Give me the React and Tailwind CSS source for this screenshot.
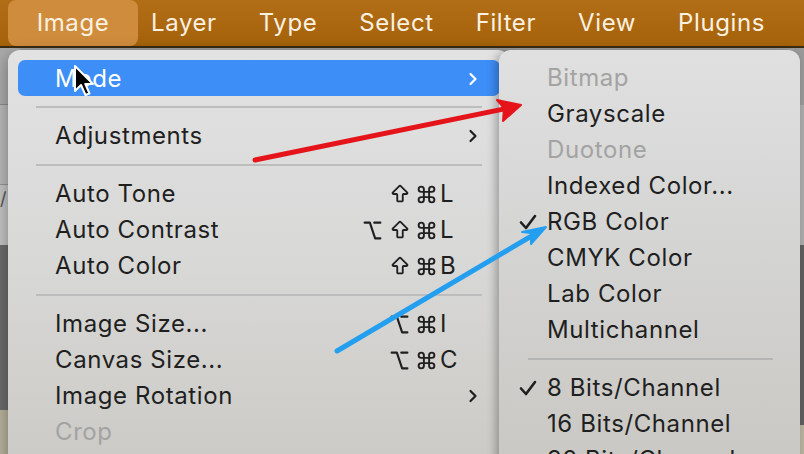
import React from "react";
import { Command, Option, ArrowBigUp } from "lucide-react";

const font = { fontFamily: "Inter, 'Noto Sans', 'DejaVu Sans', sans-serif" };

function Chevron() {
  return (
    <svg width="10" height="14" viewBox="0 0 10 14" className="shrink-0">
      <path d="M2.5 2 L7.5 7 L2.5 12" fill="none" stroke="currentColor" strokeWidth="2.2" strokeLinecap="round" strokeLinejoin="round" />
    </svg>
  );
}

function Check() {
  return (
    <svg width="18" height="16" viewBox="0 0 18 16">
      <path d="M2 8.5 L7 14 L16 2" fill="none" stroke="#1f1f1f" strokeWidth="2.6" strokeLinecap="round" strokeLinejoin="round" />
    </svg>
  );
}

const icons = {
  shift: <ArrowBigUp size={22} strokeWidth={2} />,
  cmd: <Command size={21} strokeWidth={2.2} />,
  opt: <Option size={21} strokeWidth={2.4} />,
};

function Shortcut({ mods, keyc }) {
  return (
    <div className="flex items-center text-[#1f1f1f]">
      {mods.map((m, i) => (
        <span key={i} className="w-[27px] flex justify-center">{icons[m]}</span>
      ))}
      <span className="w-[16px] text-left">{keyc}</span>
    </div>
  );
}

function Row({ label, disabled, shortcut, sub }) {
  return (
    <div className={`h-[36px] flex items-center pl-[47px] pr-[32px] ${disabled ? "text-[#a3a3a3]" : "text-[#1f1f1f]"}`}>
      <span className="flex-1">{label}</span>
      {shortcut && <div className="mr-[22px]">{shortcut}</div>}
      {sub && <span className="text-[#1f1f1f]"><Chevron /></span>}
    </div>
  );
}

function Sep() {
  return (
    <div className="h-[22px] flex items-center">
      <div className="h-[2px] flex-1 bg-[#bdbdbd] ml-[28px] mr-[28px]" />
    </div>
  );
}

function SubRow({ label, disabled, checked }) {
  return (
    <div className={`h-[36px] flex items-center ${disabled ? "text-[#a3a3a3]" : "text-[#1f1f1f]"}`}>
      <span className="w-[48px] flex justify-end pr-[10px]">{checked && <Check />}</span>
      <span>{label}</span>
    </div>
  );
}

export default function App() {
  const bar = ["Layer", "Type", "Select", "Filter", "View", "Plugins"];
  return (
    <div className="relative w-[804px] h-[454px] overflow-hidden bg-[#9e9e9e] text-[24px] tracking-[0.6px]" style={font}>
      {/* menubar */}
      <div className="h-[48px] flex items-center bg-gradient-to-b from-[#b26e17] to-[#a4620a] border-b-2 border-[#3b2a12]">
        <div className="ml-[8px] h-[46px] w-[130px] flex items-center justify-center rounded-[8px] bg-[#d08c3d] text-[#fbf1e0]">Image</div>
        <div className="flex items-center gap-[42px] ml-[13px] text-[#fbf1e0]">
          {bar.map((b) => (
            <span key={b}>{b}</span>
          ))}
        </div>
      </div>

      {/* underlying app background */}
      <div className="flex h-[406px]">
        <div className="w-[20px] flex flex-col">
          <div className="h-[57px] bg-[#a9a9a9] border-b border-[#8a8a8a]" />
          <div className="h-[80px] bg-[#b7b7b7] border-b border-[#939393]" />
          <div className="h-[60px] bg-[#c2c2c2] text-[18px] text-[#555]">/</div>
          <div className="h-[165px] bg-[#6b6b6b]" />
          <div className="flex-1 bg-[#b6b19b]" />
        </div>
        <div className="flex-1" />
        <div className="w-[10px] flex flex-col">
          <div className="h-[57px] bg-[#9a9a9a]" />
          <div className="h-[140px] bg-[#acacac]" />
          <div className="h-[180px] bg-[#5f5f5f]" />
          <div className="flex-1 bg-[#b9b4a0]" />
        </div>
      </div>

      {/* main menu */}
      <div className="absolute left-[8px] top-[50px] w-[502px] h-[420px] rounded-[12px] bg-gradient-to-b from-[#e2e2e2] via-[#d8d8d7] to-[#cbcac5] shadow-[0_4px_16px_rgba(0,0,0,0.35)] pt-[10px]">
        <div className="mx-[10px] h-[36px] rounded-[7px] bg-[#3d8ef7] flex items-center pl-[37px] pr-[22px] pt-[2px] text-white">
          <span className="flex-1">Mode</span>
          <Chevron />
        </div>
        <Sep />
        <Row label="Adjustments" sub />
        <Sep />
        <Row label="Auto Tone" shortcut={<Shortcut mods={["shift", "cmd"]} keyc="L" />} />
        <Row label="Auto Contrast" shortcut={<Shortcut mods={["opt", "shift", "cmd"]} keyc="L" />} />
        <Row label="Auto Color" shortcut={<Shortcut mods={["shift", "cmd"]} keyc="B" />} />
        <Sep />
        <Row label="Image Size..." shortcut={<Shortcut mods={["opt", "cmd"]} keyc="I" />} />
        <Row label="Canvas Size..." shortcut={<Shortcut mods={["opt", "cmd"]} keyc="C" />} />
        <Row label="Image Rotation" sub />
        <Row label="Crop" disabled />
      </div>

      {/* submenu */}
      <div className="absolute left-[499px] top-[50px] w-[301px] h-[430px] rounded-[12px] bg-gradient-to-b from-[#e0e0e0] via-[#d3d3d2] to-[#c9c7c2] shadow-[-3px_2px_10px_rgba(0,0,0,0.3)] pt-[10px]">
        <SubRow label="Bitmap" disabled />
        <SubRow label="Grayscale" />
        <SubRow label="Duotone" disabled />
        <SubRow label="Indexed Color..." />
        <SubRow label="RGB Color" checked />
        <SubRow label="CMYK Color" />
        <SubRow label="Lab Color" />
        <SubRow label="Multichannel" />
        <div className="h-[22px] flex items-center">
          <div className="h-[2px] flex-1 bg-[#b5b5b5] ml-[29px] mr-[27px]" />
        </div>
        <SubRow label="8 Bits/Channel" checked />
        <SubRow label="16 Bits/Channel" />
        <SubRow label="32 Bits/Channel" />
      </div>

      {/* annotation arrows */}
      <svg className="absolute left-0 top-0 pointer-events-none" width="804" height="454">
        <line x1="255" y1="160" x2="514" y2="107" stroke="#e5141b" strokeWidth="5" strokeLinecap="round" />
        <path d="M521 105 L497 100 L504 108 L503 121 Z" fill="#e5141b" stroke="#e5141b" strokeWidth="2" strokeLinejoin="round" />
        <line x1="337" y1="351" x2="540" y2="231" stroke="#249ff0" strokeWidth="5" strokeLinecap="round" />
        <path d="M546 227 L522 232 L531 233 L531 244 Z" fill="#249ff0" stroke="#249ff0" strokeWidth="2" strokeLinejoin="round" />
      </svg>

      {/* cursor */}
      <svg className="absolute left-[73px] top-[64px] pointer-events-none" width="24" height="36" viewBox="0 0 24 36">
        <path d="M2 2 L2 27 L8 21 L12.5 31 L16.5 29.5 L12.3 20 L20 20 Z" fill="#000" stroke="#fff" strokeWidth="2" strokeLinejoin="round" />
      </svg>
    </div>
  );
}
